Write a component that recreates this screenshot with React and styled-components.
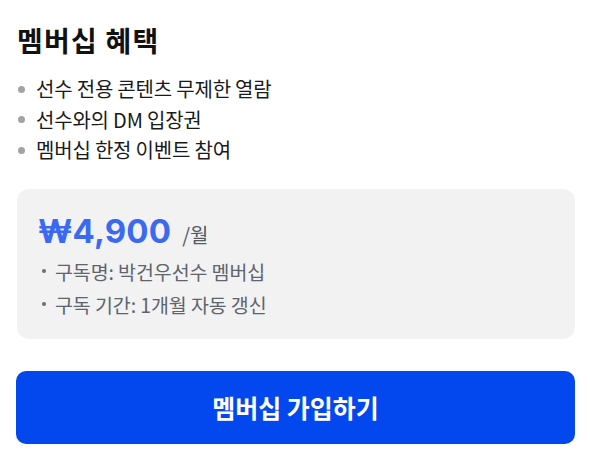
import React from "react";
import styled, { createGlobalStyle } from "styled-components";

const Global = createGlobalStyle`
  html, body { margin: 0; padding: 0; background: #ffffff; }
  body { font-family: "Noto Sans CJK KR", "Noto Sans", sans-serif; -webkit-font-smoothing: antialiased; }
`;

const Page = styled.div`
  width: 590px;
  box-sizing: border-box;
  padding: 22px 15px 0 17px;
  display: flex;
  flex-direction: column;
`;

const Title = styled.h2`
  margin: 0;
  font-size: 28px;
  font-weight: 700;
  color: #111111;
  line-height: 36px;
  letter-spacing: 1.2px;
`;

const BenefitList = styled.ul`
  list-style: none;
  margin: 16px 0 0;
  padding: 0;
  display: flex;
  flex-direction: column;
`;

const BenefitItem = styled.li`
  display: flex;
  align-items: center;
  gap: 11px;
  font-size: 20px;
  color: #1a1a1a;
  line-height: 30.5px;
  letter-spacing: -0.2px;
`;

const Dot = styled.span`
  width: ${(p) => p.$size}px;
  height: ${(p) => p.$size}px;
  border-radius: 50%;
  background: ${(p) => p.$color};
  flex-shrink: 0;
  margin-left: ${(p) => p.$offset}px;
`;

const PriceCard = styled.div`
  margin-top: 23px;
  background: #f2f2f3;
  border-radius: 12px;
  padding: 18px 21px 18px;
  display: flex;
  flex-direction: column;
`;

const PriceRow = styled.div`
  display: flex;
  align-items: baseline;
  gap: 11px;
`;

const Price = styled.span`
  font-family: "Inter", "Noto Sans", sans-serif;
  font-size: 33px;
  font-weight: 700;
  color: #3b69f2;
  line-height: 48px;
  letter-spacing: 0.2px;
`;

const Unit = styled.span`
  font-size: 20px;
  color: #555a63;
`;

const DetailList = styled.ul`
  list-style: none;
  margin: 0;
  padding: 0;
  display: flex;
  flex-direction: column;
`;

const DetailItem = styled.li`
  display: flex;
  align-items: center;
  gap: 9px;
  font-size: 19.5px;
  color: #60646c;
  line-height: 33px;
  letter-spacing: -0.1px;
`;

const JoinButton = styled.button`
  margin-top: 32px;
  height: 73px;
  width: 559px;
  margin-left: -1px;
  border: none;
  border-radius: 10px;
  background: #0348ef;
  color: #ffffff;
  font-family: "Noto Sans CJK KR", "Noto Sans", sans-serif;
  font-size: 25px;
  font-weight: 700;
  cursor: pointer;
`;

const benefits = ["선수 전용 콘텐츠 무제한 열람", "선수와의 DM 입장권", "멤버십 한정 이벤트 참여"];
const details = ["구독명: 박건우선수 멤버십", "구독 기간: 1개월 자동 갱신"];

export default function App() {
  return (
    <>
      <Global />
      <Page>
        <Title>멤버십 혜택</Title>
        <BenefitList>
          {benefits.map((b) => (
            <BenefitItem key={b}>
              <Dot $size={7} $color="#a3a3a6" $offset={1} />
              {b}
            </BenefitItem>
          ))}
        </BenefitList>
        <PriceCard>
          <PriceRow>
            <Price>₩4,900</Price>
            <Unit>/월</Unit>
          </PriceRow>
          <DetailList>
            {details.map((d) => (
              <DetailItem key={d}>
                <Dot $size={4} $color="#6b6f76" $offset={4} />
                {d}
              </DetailItem>
            ))}
          </DetailList>
        </PriceCard>
        <JoinButton>멤버십 가입하기</JoinButton>
      </Page>
    </>
  );
}
